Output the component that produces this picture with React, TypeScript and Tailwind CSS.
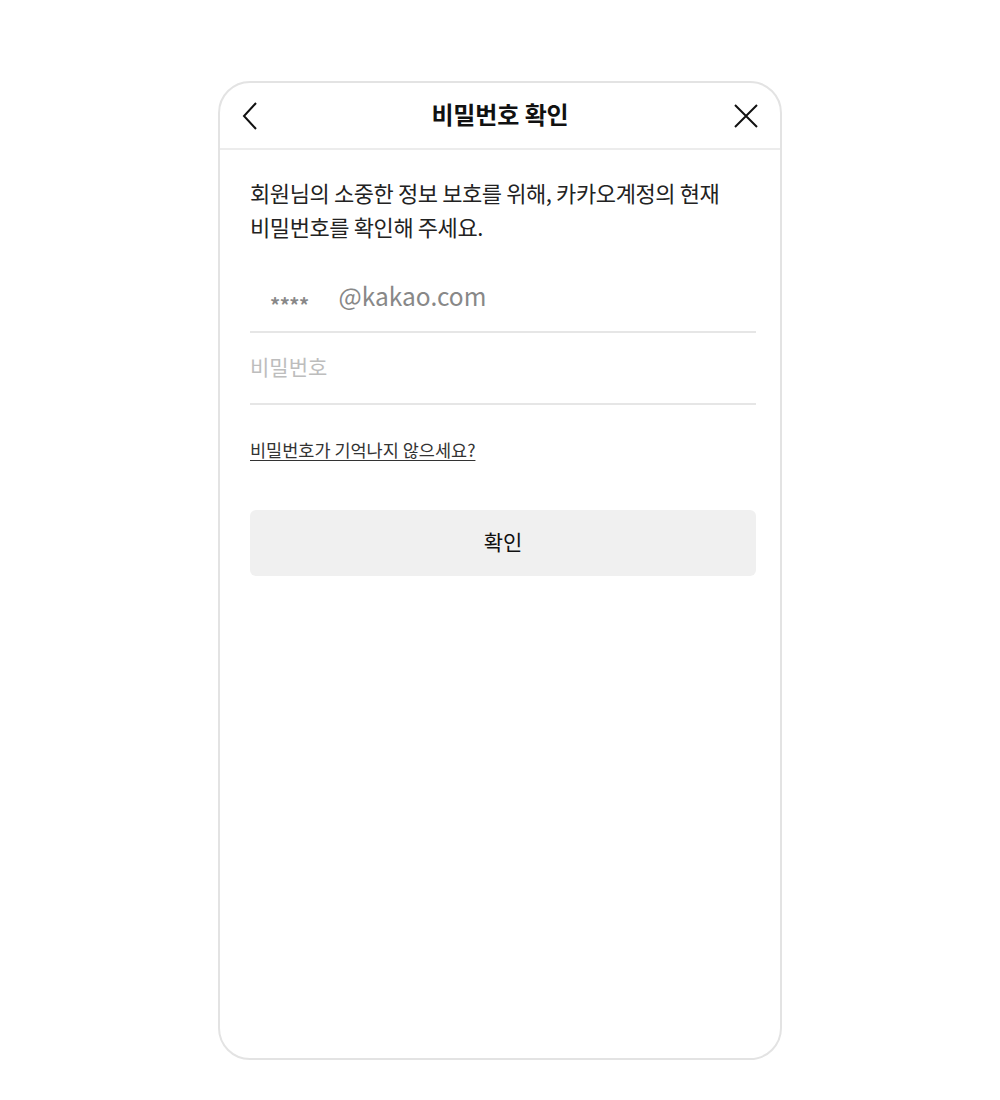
import React from "react";

export default function App() {
  return (
    <div className="w-[1000px] h-[1100px] bg-white flex justify-center pt-[81px]" style={{ fontFamily: '"Noto Sans CJK KR", "Noto Sans", sans-serif' }}>
      <div className="w-[564px] h-[979px] border-2 border-[#e3e3e3] rounded-[32px] flex flex-col overflow-hidden">
        <div className="h-[67px] flex items-center justify-between px-[20px] border-b-2 border-[#ececec] relative">
          <svg width="20" height="30" viewBox="0 0 20 30" className="ml-[1px]">
            <path d="M15 2 L3 15 L15 28" fill="none" stroke="#111" strokeWidth="2" />
          </svg>
          <div className="absolute left-0 right-0 text-center text-[24px] font-bold text-[#111] pointer-events-none tracking-[-0.1px] mt-[-3px]">비밀번호 확인</div>
          <svg width="26" height="26" viewBox="0 0 26 26" className="mr-[1px]">
            <path d="M2 2 L24 24 M24 2 L2 24" fill="none" stroke="#111" strokeWidth="2" />
          </svg>
        </div>
        <div className="pl-[30px] pr-[24px] pt-[25px]">
          <p className="text-[22px] leading-[34px] text-[#222] tracking-[-0.4px] whitespace-nowrap">
            회원님의 소중한 정보 보호를 위해, 카카오계정의 현재<br />비밀번호를 확인해 주세요.
          </p>
          <div className="mt-[30px] h-[60px] border-b-2 border-[#e6e6e6] flex items-center">
            <span className="ml-[20px] text-[20px] text-[#888] font-bold tracking-[-0.5px] mt-[6px]">****</span>
            <span className="ml-[30px] text-[24.5px] text-[#888] mt-[-12px]">@kakao.com</span>
          </div>
          <div className="h-[72px] border-b-2 border-[#e6e6e6] flex items-center">
            <span className="text-[21px] text-[#bdbdbd] mt-[-2px]">비밀번호</span>
          </div>
          <div className="mt-[32px]">
            <span className="text-[17.5px] text-[#333] underline underline-offset-[3px]">비밀번호가 기억나지 않으세요?</span>
          </div>
          <button className="mt-[47px] w-full h-[66px] bg-[#f0f0f0] rounded-[6px] text-[21px] text-[#111] pb-[3px]">확인</button>
        </div>
      </div>
    </div>
  );
}
